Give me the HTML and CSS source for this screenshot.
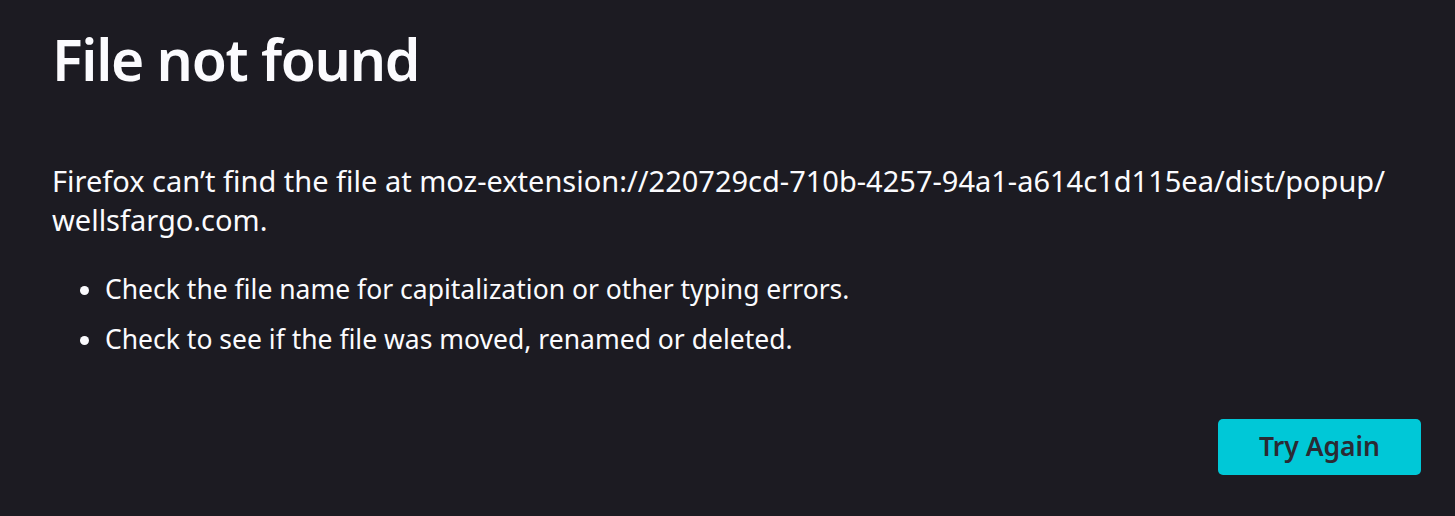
FILE: index.html
```html
<!DOCTYPE html>
<html lang="en">
<head>
<meta charset="utf-8">
<title>Problem loading page</title>
<link rel="stylesheet" href="styles.css">
</head>
<body>
<main class="container">
  <h1 class="title">File not found</h1>
  <p class="desc">Firefox can’t find the file at moz-extension://220729cd-710b-4257-94a1-a614c1d115ea/dist/popup/ wellsfargo.com.</p>
  <ul class="tips">
    <li>Check the file name for capitalization or other typing errors.</li>
    <li>Check to see if the file was moved, renamed or deleted.</li>
  </ul>
  <div class="actions">
    <button class="primary" type="button">Try Again</button>
  </div>
</main>
</body>
</html>
```
FILE: styles.css
```css
html, body {
  margin: 0;
  padding: 0;
  background: #1c1b22;
  color: #fbfbfe;
  font-family: "Noto Sans", "Open Sans", sans-serif;
}
.container {
  display: flex;
  flex-direction: column;
  padding: 24px 34px 0 52px;
}
.title {
  margin: 0;
  font-size: 57px;
  font-weight: 600;
  letter-spacing: -1.3px;
  line-height: 70px;
}
.desc {
  margin: 67px 0 0;
  width: 1345px;
  font-size: 29px;
  line-height: 39px;
}
.tips {
  margin: 31px 0 0;
  padding-left: 53px;
  font-size: 26.5px;
  line-height: 39px;
}
.tips li + li {
  margin-top: 11px;
}
.actions {
  display: flex;
  justify-content: flex-end;
  margin-top: 60px;
}
.primary {
  width: 203px;
  font-family: inherit;
  font-size: 26.5px;
  font-weight: 600;
  line-height: 39px;
  padding: 8px 0 9px;
  border: none;
  border-radius: 5px;
  background: #00c8d7;
  color: #2b2a33;
  text-align: center;
}
```
